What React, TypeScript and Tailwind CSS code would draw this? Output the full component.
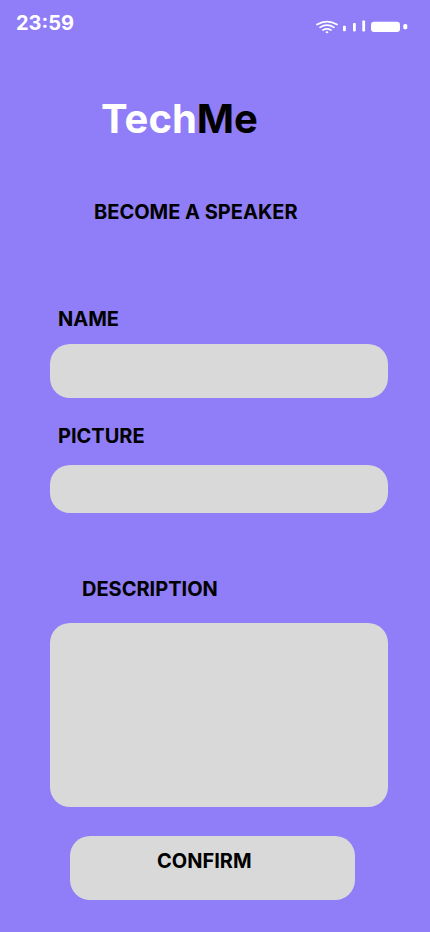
import React from "react";

function StatusIcons() {
  return (
    <svg className="mt-[19px] h-[16px] w-[94px]" viewBox="315 19 94 16" fill="white">
      <g fill="none" stroke="white" strokeWidth="1.700" strokeLinecap="round">
        <path d="M317 24.600Q327 18.600 337 24.600" />
        <path d="M320 27.400Q327 23 334 27.400" />
        <path d="M323 30Q327 27.600 331 30" />
      </g>
      <ellipse cx="327" cy="32.200" rx="1.400" ry="1" />
      <rect x="343" y="25.700" width="2.800" height="5.600" rx="0.800" />
      <rect x="353" y="23" width="2.800" height="8.400" rx="0.800" />
      <rect x="362.300" y="20.400" width="2.800" height="11.200" rx="0.800" />
      <rect x="371" y="21.700" width="29" height="10.300" rx="3" />
      <rect x="403.300" y="24" width="4" height="5.300" rx="1.500" />
    </svg>
  );
}

export default function App() {
  return (
    <main className="flex h-[932px] w-[430px] flex-col overflow-hidden bg-[#907df8] font-['Inter',sans-serif] text-[20px] leading-6 font-bold text-black">
      <header className="flex h-[95px] shrink-0 items-start justify-between pr-[21px] pl-4">
        <span className="mt-[11px] text-white">23:59</span>
        <StatusIcons />
      </header>
      <h1 className="ml-[101px] h-[105px] shrink-0 text-[40px] leading-[48px]">
        <span className="text-white">Tech</span>Me
      </h1>
      <h2 className="ml-[94px] h-[107px] shrink-0">BECOME A SPEAKER</h2>
      <label className="ml-[58px] h-[37px] shrink-0">NAME</label>
      <div className="ml-[50px] h-[54px] w-[338px] shrink-0 rounded-[20px] bg-[#d9d9d9]" />
      <label className="mt-[26px] ml-[58px] h-[41px] shrink-0">PICTURE</label>
      <div className="ml-[50px] h-[48px] w-[338px] shrink-0 rounded-[20px] bg-[#d9d9d9]" />
      <label className="mt-[64px] ml-[82px] h-[46px] shrink-0">DESCRIPTION</label>
      <div className="ml-[50px] h-[184px] w-[338px] shrink-0 rounded-[20px] bg-[#d9d9d9]" />
      <button className="mt-[29px] ml-[70px] flex h-[64px] w-[285px] shrink-0 items-start rounded-[20px] bg-[#d9d9d9] pt-[13px] pl-[87px]">
        CONFIRM
      </button>
    </main>
  );
}
